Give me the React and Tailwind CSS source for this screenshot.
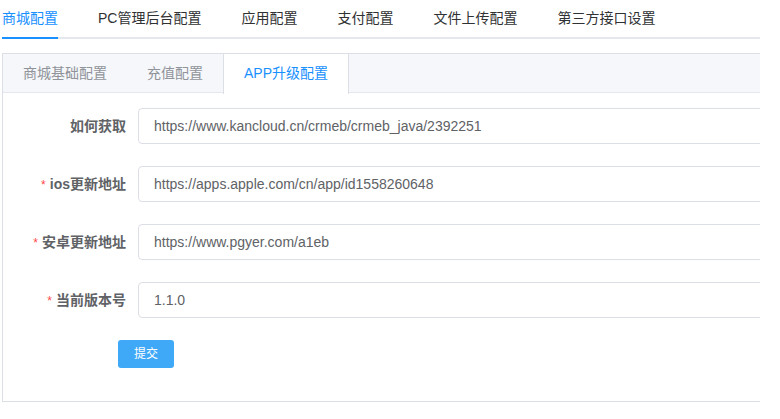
const topTabs = ['商城配置', 'PC管理后台配置', '应用配置', '支付配置', '文件上传配置', '第三方接口设置']
const subTabs = ['商城基础配置', '充值配置', 'APP升级配置']

const fields = [
  { label: '如何获取', value: 'https://www.kancloud.cn/crmeb/crmeb_java/2392251' },
  { label: 'ios更新地址', value: 'https://apps.apple.com/cn/app/id1558260648', required: true },
  { label: '安卓更新地址', value: 'https://www.pgyer.com/a1eb', required: true },
  { label: '当前版本号', value: '1.1.0', required: true },
]

const App = () => {
  return (
    <div
      className="w-[780px] h-[419px] bg-white overflow-hidden text-sm"
      style={{ fontFamily: '"Liberation Sans", "Noto Sans CJK SC", sans-serif' }}
    >
      <div className="ml-[2px] w-[758px] overflow-hidden">
        {/* top tabs */}
        <div className="flex border-b-2 border-[#e4e7ed] h-[39px]">
          {topTabs.map((t, i) => (
            <div
              key={t}
              className={`relative h-[37px] leading-[37px] ${i === 0 ? 'pr-5' : 'px-5'} ${i === 0 ? 'text-[#1890ff]' : 'text-[#303133]'}`}
            >
              {t}
              {i === 0 && <div className="absolute left-0 right-5 -bottom-[2px] h-[2px] bg-[#1890ff]" />}
            </div>
          ))}
        </div>

        {/* card */}
        <div className="mt-[14px] w-[820px] border border-[#dcdfe6] h-[349px]">
          <div className="flex h-[39px] bg-[#f5f7fa] border-b border-[#e4e7ed]">
            {subTabs.map((t, i) =>
              i === 2 ? (
                <div
                  key={t}
                  className="h-[40px] leading-[39px] px-5 bg-white border-x border-[#dcdfe6] text-[#1890ff]"
                >
                  {t}
                </div>
              ) : (
                <div key={t} className="h-[39px] leading-[39px] px-5 text-[#909399]">
                  {t}
                </div>
              )
            )}
          </div>

          <div className="pt-[15px] pl-[15px]">
            {fields.map((f) => (
              <div key={f.label} className="flex items-center mb-[22px]">
                <div className="w-[120px] pr-3 text-right font-bold text-[#606266]">
                  {f.required && <span className="text-[#ff4949] mr-1 font-normal text-xs">*</span>}
                  {f.label}
                </div>
                <div className="flex-1 h-9 border border-[#dcdfe6] rounded px-[15px] leading-[34px] text-[#606266]">
                  {f.value}
                </div>
              </div>
            ))}
            <button className="ml-[100px] w-14 h-7 rounded-[3px] bg-[#3fa9f7] text-white text-xs">
              提交
            </button>
          </div>
        </div>
      </div>
    </div>
  )
}

export default App
